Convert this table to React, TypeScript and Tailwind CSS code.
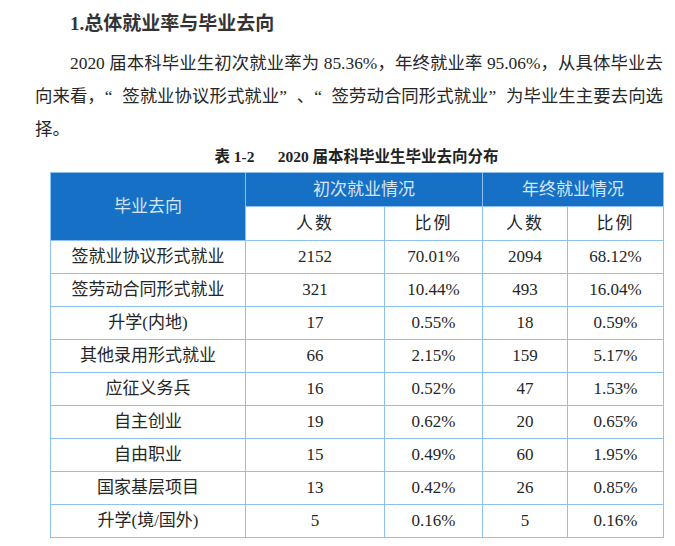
const rows = [
  ["签就业协议形式就业", "2152", "70.01%", "2094", "68.12%"],
  ["签劳动合同形式就业", "321", "10.44%", "493", "16.04%"],
  ["升学(内地)", "17", "0.55%", "18", "0.59%"],
  ["其他录用形式就业", "66", "2.15%", "159", "5.17%"],
  ["应征义务兵", "16", "0.52%", "47", "1.53%"],
  ["自主创业", "19", "0.62%", "20", "0.65%"],
  ["自由职业", "15", "0.49%", "60", "1.95%"],
  ["国家基层项目", "13", "0.42%", "26", "0.85%"],
  ["升学(境/国外)", "5", "0.16%", "5", "0.16%"],
];

const cell = "border-[1.5px] border-[#8fc1f0] text-center p-0";

// full-width quote marks like a Song typeface sets them
const Q = ({ c, side }: { c: string; side: "l" | "r" }) => (
  <span className={`inline-block w-[1em] ${side === "l" ? "text-right" : "text-left"}`}>{c}</span>
);

export default function App() {
  return (
    <div className="w-[675px] h-[546px] bg-white text-[#262626] font-['Liberation_Serif','Noto_Sans_CJK_SC',serif] overflow-hidden">
      <div className="pl-[35px] w-[663px]">
        <h2 className="pt-[12px] pl-[35px] text-[19px] leading-[24px] font-bold text-[#333]">
          1.总体就业率与毕业去向
        </h2>
        <div className="mt-[11px] text-[17.4px] leading-[33px]">
          <p className="pl-[35px] text-justify [text-align-last:justify]">
            2020 届本科毕业生初次就业率为 85.36%，年终就业率 95.06%，从具体毕业去
          </p>
          <p className="text-justify [text-align-last:justify]">
            向来看，<Q c="“" side="l" />签就业协议形式就业<Q c="”" side="r" />、<Q c="“" side="l" />签劳动合同形式就业<Q c="”" side="r" />为毕业生主要去向选
          </p>
          <p>择。</p>
        </div>
      </div>
      <div className="ml-[50px] w-[613px]">
        <div className="mt-[1px] text-center text-[15.5px] leading-[20px] font-bold whitespace-pre text-[#222]">
          {"表 1-2　  2020 届本科毕业生毕业去向分布"}
        </div>
        <table className="mt-[5px] w-[613px] border-collapse table-fixed text-[17px]">
          <colgroup>
            <col className="w-[195px]" />
            <col className="w-[139px]" />
            <col className="w-[98px]" />
            <col className="w-[85px]" />
            <col className="w-[96px]" />
          </colgroup>
          <thead>
            <tr className="h-[34px]">
              <th rowSpan={2} className={`${cell} bg-[#1570c6] text-[#d5e6f8] font-normal`}>
                毕业去向
              </th>
              <th colSpan={2} className={`${cell} bg-[#1570c6] text-[#d5e6f8] font-normal`}>
                初次就业情况
              </th>
              <th colSpan={2} className={`${cell} bg-[#1570c6] text-[#d5e6f8] font-normal`}>
                年终就业情况
              </th>
            </tr>
            <tr className="h-[34px]">
              <th className={`${cell} font-normal tracking-[2px]`}>人数</th>
              <th className={`${cell} font-normal tracking-[2px]`}>比例</th>
              <th className={`${cell} font-normal tracking-[2px]`}>人数</th>
              <th className={`${cell} font-normal tracking-[2px]`}>比例</th>
            </tr>
          </thead>
          <tbody>
            {rows.map((r) => (
              <tr key={r[0]} className="h-[33px]">
                {r.map((v, i) => (
                  <td key={i} className={cell}>
                    {v}
                  </td>
                ))}
              </tr>
            ))}
          </tbody>
        </table>
      </div>
    </div>
  );
}
